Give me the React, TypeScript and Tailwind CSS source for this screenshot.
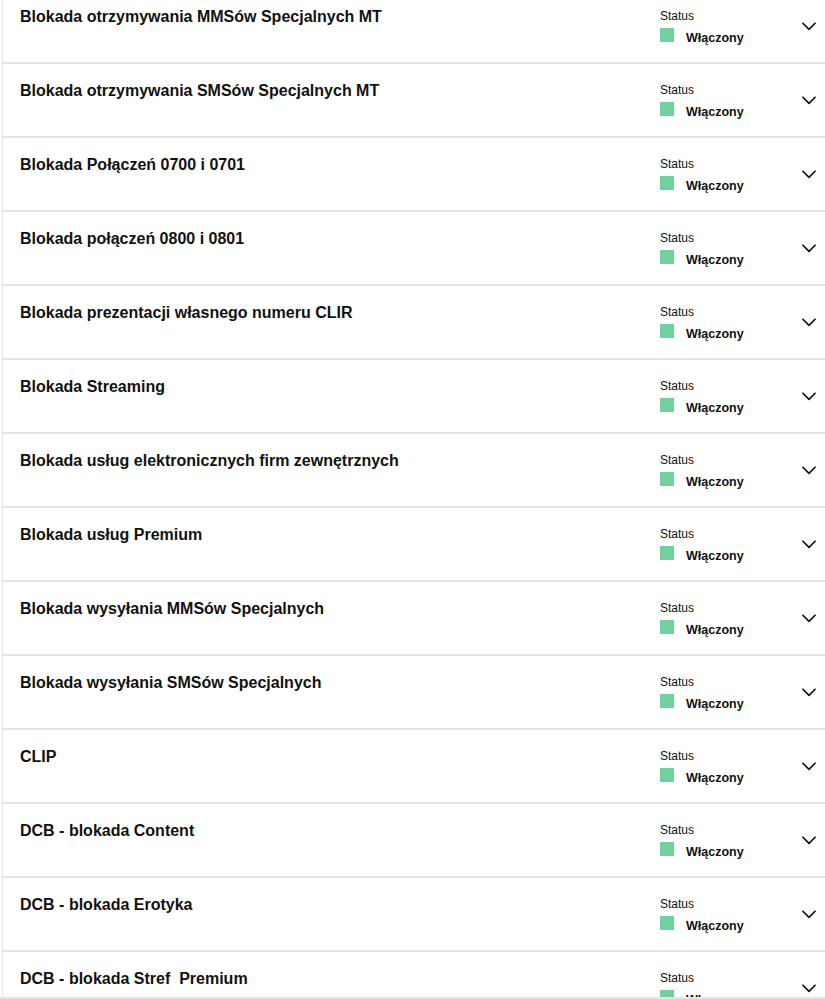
import React from "react";

const items = [
  "Blokada otrzymywania MMSów Specjalnych MT",
  "Blokada otrzymywania SMSów Specjalnych MT",
  "Blokada Połączeń 0700 i 0701",
  "Blokada połączeń 0800 i 0801",
  "Blokada prezentacji własnego numeru CLIR",
  "Blokada Streaming",
  "Blokada usług elektronicznych firm zewnętrznych",
  "Blokada usług Premium",
  "Blokada wysyłania MMSów Specjalnych",
  "Blokada wysyłania SMSów Specjalnych",
  "CLIP",
  "DCB - blokada Content",
  "DCB - blokada Erotyka",
  "DCB - blokada Stref\u00a0 Premium",
];

const Chevron = () => (
  <svg width="15" height="9" viewBox="0 0 15 9" fill="none">
    <polyline
      points="1,1 7.5,7.5 14,1"
      stroke="#111"
      strokeWidth="1.8"
      strokeLinecap="round"
      strokeLinejoin="round"
    />
  </svg>
);

const Row = ({ title }: { title: string }) => {
  return (
    <div className="flex h-[74px] shrink-0 border-b-2 border-[#e4e4e4]">
      <div className="flex-1 pl-[17px] pt-[18px]">
        <h3 className="text-[16px] leading-[18px] font-bold text-[#111]">
          {title}
        </h3>
      </div>
      <div className="w-[142px] pt-[19px]">
        <p className="text-[12px] leading-[14px] text-[#111]">Status</p>
        <div className="flex items-start gap-[12px] mt-[5px]">
          <span className="block w-[14px] h-[14px] bg-[#71d0a0]" />
          <span className="text-[12.5px] leading-[14px] font-bold text-[#111] mt-[3px]">
            Włączony
          </span>
        </div>
      </div>
      <div className="w-[23px] pt-[32px] pr-[9px] flex justify-end">
        <Chevron />
      </div>
    </div>
  );
};

export default function App() {
  return (
    <div
      className="h-[999px] overflow-hidden bg-white flex flex-col"
      style={{ fontFamily: '"Liberation Sans", Arial, sans-serif' }}
    >
      <div className="h-[997px] overflow-hidden">
        <div className="ml-[2px] border-l border-[#e4e4e4] -mt-[10px] flex flex-col">
          {items.map((t) => (
            <Row key={t} title={t} />
          ))}
        </div>
      </div>
      <div className="h-[2px] bg-[#e4e4e4]" />
    </div>
  );
}
